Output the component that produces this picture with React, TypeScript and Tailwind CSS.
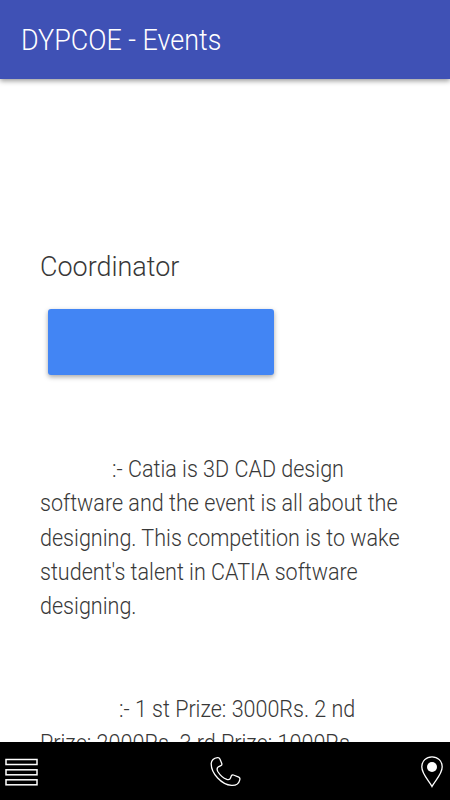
const about = [
  "software and the event is all about the",
  "designing. This competition is to wake",
  "student's talent in CATIA software",
  "designing.",
];

function MenuIcon() {
  return (
    <svg width="34" height="28" viewBox="0 0 34 28" fill="none" stroke="#fff" strokeWidth="1.5">
      <rect x="1" y="1.5" width="31" height="5" />
      <rect x="1" y="11.8" width="31" height="5" />
      <rect x="1" y="21.8" width="31" height="5" />
    </svg>
  );
}

function PhoneIcon() {
  return (
    <svg className="mr-[8px]" width="32" height="32" viewBox="0 0 32 32" fill="none" stroke="#fff" strokeWidth="1.3" strokeLinejoin="round">
      <path d="M1.2 7.5C1.5 4.5 4 2.2 7.5 1.7C9 1.5 9.5 2 9.9 3L11.8 7.6C12.1 8.7 11.8 9.3 10.8 9.7L8.4 10.8C6.7 12 6.8 13.6 7.8 15.5C10 19.1 13.1 22.1 16.8 23.4C18.8 24 20 23.6 20.5 22L21.5 19.6C21.9 18.9 22.6 18.7 23.4 19L28.8 21.2C30 21.8 30.2 22.7 29.7 24.1C28.8 27.7 26 29.7 21.5 29.4C11.8 28.7 1.1 17.6 1.2 7.5Z" />
    </svg>
  );
}

function PinIcon() {
  return (
    <svg width="24" height="34" viewBox="0 0 24 34" fill="none">
      <path d="M12 31.5C9.2 25.8 1.8 19.3 1.8 11.8C1.8 6 6.2 1.8 12 1.8S22.2 6 22.2 11.8C22.2 19.3 14.8 25.8 12 31.5Z" stroke="#fff" strokeWidth="1.3" />
      <circle cx="12" cy="12" r="5" fill="#fff" />
    </svg>
  );
}

export default function App() {
  return (
    <div className="flex h-[800px] w-[450px] flex-col overflow-hidden bg-white font-['Roboto',sans-serif] font-light text-[#383838]">
      <header className="z-10 flex h-[79px] shrink-0 items-center bg-[#3f51b5] pt-[3px] pl-[21px] text-white shadow-[0_2px_5px_rgba(0,0,0,0.4)]">
        <h1 className="text-[29px] whitespace-nowrap origin-left scale-x-[0.928]">DYPCOE - Events</h1>
      </header>
      <main className="min-h-0 flex-1 overflow-hidden px-10 pt-[168px]">
        <h2 className="h-10 text-[28.5px] leading-10 whitespace-nowrap origin-left scale-x-[0.945]">Coordinator</h2>
        <button className="mt-[22px] ml-2 block h-[66px] w-[226px] rounded-[3px] bg-[#4285f4] shadow-[0_2px_5px_rgba(0,0,0,0.35)]" />
        <div className="mt-[77px] text-[23.5px] leading-[34.3px] whitespace-nowrap">
          <p className="ml-[72px] origin-left scale-x-[0.917]">:- Catia is 3D CAD design</p>
          {about.map((line) => (
            <p key={line} className="origin-left scale-x-[0.917]">{line}</p>
          ))}
          <p className="mt-[68.6px] ml-[79px] origin-left scale-x-[0.915]">:- 1 st Prize: 3000Rs. 2 nd</p>
          <p className="origin-left scale-x-[0.917]">Prize: 2000Rs. 3 rd Prize: 1000Rs.</p>
        </div>
      </main>
      <footer className="flex h-[58px] shrink-0 items-center justify-between bg-black pt-[2px] pr-[6px] pl-[5px]">
        <MenuIcon />
        <PhoneIcon />
        <PinIcon />
      </footer>
    </div>
  );
}
